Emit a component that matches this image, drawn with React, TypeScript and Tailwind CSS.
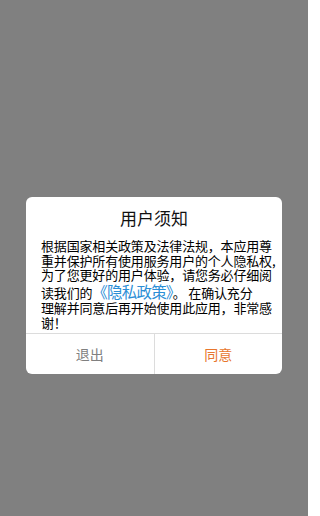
export default function App() {
  const font = { fontFamily: '"Noto Sans CJK SC", "Noto Sans", sans-serif' };
  return (
    <div className="h-[516px] w-[308px] bg-[#808080] pt-[197px] px-[26px]" style={font}>
      <div className="w-[256px] bg-white rounded-[6px] overflow-hidden">
        <div className="pt-[9px] text-center text-[17px] leading-[24px] text-[#111]">用户须知</div>
        <div className="pt-[9px] pb-[3px] pl-[15px] pr-[4px] text-[13px] leading-[14.5px] tracking-[-0.17px] text-[#000]">
          根据国家相关政策及法律法规，本应用尊<br />
          重并保护所有使用服务用户的个人隐私权,<br />
          为了您更好的用户体验，请您务必仔细阅<br />
          <span className="inline-block leading-[17.5px]">
            读我们的<span className="text-[15.5px] text-[#2b8ed6] tracking-[-0.8px]">《隐私政策》</span>。 在确认充分
          </span>
          <br />
          理解并同意后再开始使用此应用，非常感<br />
          谢！
        </div>
        <div className="flex h-[41px] border-t border-[#dcdcdc]">
          <div className="flex-1 flex items-center justify-center text-[14px] text-[#808080] border-r border-[#dcdcdc]">退出</div>
          <div className="flex-1 flex items-center justify-center text-[14px] text-[#e8762d]">同意</div>
        </div>
      </div>
    </div>
  );
}
